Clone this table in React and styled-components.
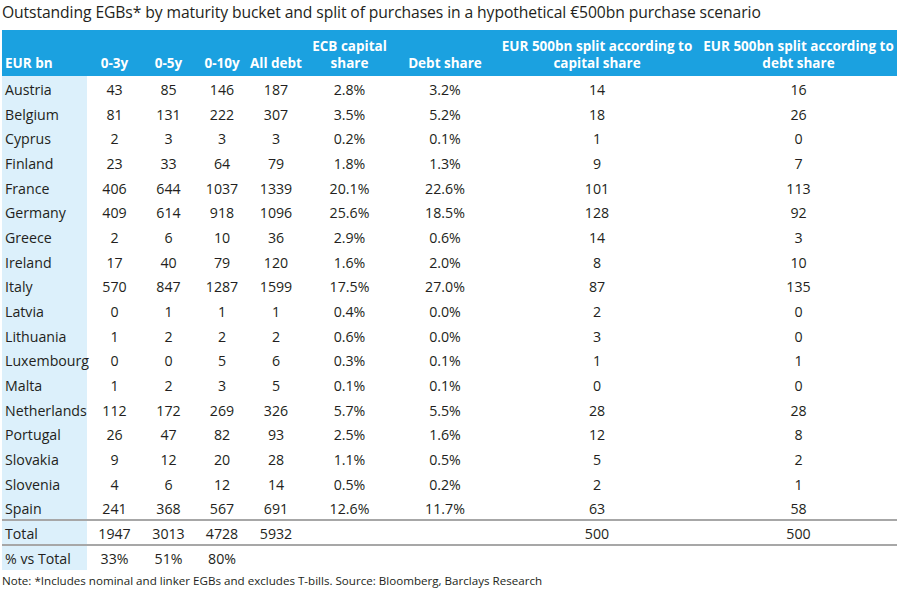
import React from 'react';
import styled, { createGlobalStyle } from 'styled-components';

const rows = [
    ['Austria', 43, 85, 146, 187, '2.8%', '3.2%', 14, 16],
    ['Belgium', 81, 131, 222, 307, '3.5%', '5.2%', 18, 26],
    ['Cyprus', 2, 3, 3, 3, '0.2%', '0.1%', 1, 0],
    ['Finland', 23, 33, 64, 79, '1.8%', '1.3%', 9, 7],
    ['France', 406, 644, 1037, 1339, '20.1%', '22.6%', 101, 113],
    ['Germany', 409, 614, 918, 1096, '25.6%', '18.5%', 128, 92],
    ['Greece', 2, 6, 10, 36, '2.9%', '0.6%', 14, 3],
    ['Ireland', 17, 40, 79, 120, '1.6%', '2.0%', 8, 10],
    ['Italy', 570, 847, 1287, 1599, '17.5%', '27.0%', 87, 135],
    ['Latvia', 0, 1, 1, 1, '0.4%', '0.0%', 2, 0],
    ['Lithuania', 1, 2, 2, 2, '0.6%', '0.0%', 3, 0],
    ['Luxembourg', 0, 0, 5, 6, '0.3%', '0.1%', 1, 1],
    ['Malta', 1, 2, 3, 5, '0.1%', '0.1%', 0, 0],
    ['Netherlands', 112, 172, 269, 326, '5.7%', '5.5%', 28, 28],
    ['Portugal', 26, 47, 82, 93, '2.5%', '1.6%', 12, 8],
    ['Slovakia', 9, 12, 20, 28, '1.1%', '0.5%', 5, 2],
    ['Slovenia', 4, 6, 12, 14, '0.5%', '0.2%', 2, 1],
    ['Spain', 241, 368, 567, 691, '12.6%', '11.7%', 63, 58],
];

const widths = [85, 55, 53, 54, 54, 93, 98, 206, 197];

const headers = [
    'EUR bn', '0-3y', '0-5y', '0-10y', 'All debt',
    <>ECB capital<br />share</>,
    'Debt share',
    <>EUR 500bn split according to<br />capital share</>,
    <>EUR 500bn split according to<br />debt share</>,
];

function App() {
    return (
        <Page>
            <GlobalStyle />
            <Title>Outstanding EGBs* by maturity bucket and split of purchases in a hypothetical €500bn purchase scenario</Title>
            <Table>
                <colgroup>
                    {widths.map((w, i) => <col key={i} style={{ width: w }} />)}
                </colgroup>
                <thead>
                    <HeadRow>
                        {headers.map((h, i) => <Th key={i} first={i === 0}>{h}</Th>)}
                    </HeadRow>
                </thead>
                <tbody>
                    {rows.map(r => (
                        <Row key={r[0]}>
                            {r.map((v, i) => i === 0
                                ? <Name key={i}>{v}</Name>
                                : <Td key={i}>{v}</Td>)}
                        </Row>
                    ))}
                    <Row lined>
                        <Name>Total</Name>
                        <Td>1947</Td>
                        <Td>3013</Td>
                        <Td>4728</Td>
                        <Td>5932</Td>
                        <Td></Td>
                        <Td></Td>
                        <Td>500</Td>
                        <Td>500</Td>
                    </Row>
                    <Row>
                        <Name>% vs Total</Name>
                        <Td>33%</Td>
                        <Td>51%</Td>
                        <Td>80%</Td>
                        <Td></Td>
                        <Td></Td>
                        <Td></Td>
                        <Td></Td>
                        <Td></Td>
                    </Row>
                </tbody>
            </Table>
            <Note>Note: *Includes nominal and linker EGBs and excludes T-bills. Source: Bloomberg, Barclays Research</Note>
        </Page>
    );
}

const GlobalStyle = createGlobalStyle`
    body {
        margin: 0;
        background: #ffffff;
        font-family: "Open Sans", "Noto Sans", sans-serif;
        color: #231f20;
    }
`;

const Page = styled.div`
    width: 901px;
    height: 592px;
    overflow: hidden;
    padding-left: 2px;
    box-sizing: border-box;
`;

const Title = styled.div`
    font-size: 15.7px;
    line-height: 24px;
    height: 30px;
    letter-spacing: -0.1px;
    color: #231f20;
    white-space: nowrap;
`;

const Table = styled.table`
    border-collapse: collapse;
    table-layout: fixed;
    width: 895px;
    font-size: 14.2px;
`;

const HeadRow = styled.tr`
    height: 46px;
`;

const Th = styled.th`
    background: #1ba1e0;
    color: #ffffff;
    font-weight: 700;
    font-size: 13.5px;
    line-height: 17px;
    padding: 0 0 4px ${p => (p.first ? '3px' : '0')};
    vertical-align: bottom;
    text-align: ${p => (p.first ? 'left' : 'center')};
    white-space: nowrap;
`;

const Row = styled.tr`
    height: 24.7px;
    & > td {
        border-top: ${p => (p.lined ? '2px solid #a7a7a7' : 'none')};
        border-bottom: ${p => (p.lined ? '2px solid #a7a7a7' : 'none')};
    }
`;

const Name = styled.td`
    background: #dcf0fb;
    padding: 3px 0 0 3px;
    white-space: nowrap;
    line-height: 18px;
`;

const Td = styled.td`
    text-align: center;
    padding: 3px 0 0 0;
    line-height: 18px;
`;

const Note = styled.div`
    font-size: 11.6px;
    line-height: 20px;
    padding-top: 1px;
    color: #231f20;
    white-space: nowrap;
`;

export default App;
